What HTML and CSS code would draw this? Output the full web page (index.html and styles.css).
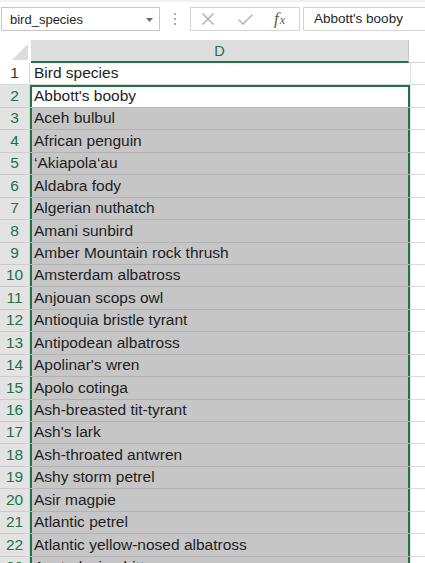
FILE: index.html
```html
<!DOCTYPE html>
<html>
<head>
<meta charset="utf-8">
<link rel="stylesheet" href="styles.css">
</head>
<body>
<div class="toolbar">
  <div class="namebox">
    <span class="nb-text">bird_species</span>
    <svg class="nb-arrow" width="7" height="4" viewBox="0 0 7 4"><path d="M0 0H7L3.5 4Z" fill="#6d6d6d"/></svg>
  </div>
  <div class="dots"><i></i><i></i><i></i></div>
  <div class="fxbtns">
    <svg class="ic-x" width="12" height="12" viewBox="0 0 12 12"><path d="M0.5 0.5L11.5 11.5M11.5 0.5L0.5 11.5" stroke="#ababab" stroke-width="1.3" fill="none"/></svg>
    <svg class="ic-ok" width="15" height="11" viewBox="0 0 15 11"><path d="M0.6 5.6L5 10L14.4 0.6" stroke="#ababab" stroke-width="1.3" fill="none"/></svg>
    <span class="fx"><span class="f">f</span><span class="x">x</span></span>
  </div>
  <div class="formula">Abbott's booby</div>
</div>
<div class="sheet">
  <div class="hrow">
    <div class="corner"><svg width="31" height="23" viewBox="0 0 31 23"><path d="M12 20L28 4V20Z" fill="#dcdcdc"/></svg></div>
    <div class="hd">D</div>
    <div class="he"></div>
  </div>
  <div class="row"><div class="rh">1</div><div class="cd">Bird species</div><div class="ce"></div></div>
  <div class="row srow"><div class="rh">2</div><div class="cd act">Abbott's booby</div><div class="ce"></div></div>
  <div class="row srow"><div class="rh">3</div><div class="cd sel">Aceh bulbul</div><div class="ce"></div></div>
  <div class="row srow"><div class="rh">4</div><div class="cd sel">African penguin</div><div class="ce"></div></div>
  <div class="row srow"><div class="rh">5</div><div class="cd sel">‘Akiapola‘au</div><div class="ce"></div></div>
  <div class="row srow"><div class="rh">6</div><div class="cd sel">Aldabra fody</div><div class="ce"></div></div>
  <div class="row srow"><div class="rh">7</div><div class="cd sel">Algerian nuthatch</div><div class="ce"></div></div>
  <div class="row srow"><div class="rh">8</div><div class="cd sel">Amani sunbird</div><div class="ce"></div></div>
  <div class="row srow"><div class="rh">9</div><div class="cd sel">Amber Mountain rock thrush</div><div class="ce"></div></div>
  <div class="row srow"><div class="rh">10</div><div class="cd sel">Amsterdam albatross</div><div class="ce"></div></div>
  <div class="row srow"><div class="rh">11</div><div class="cd sel">Anjouan scops owl</div><div class="ce"></div></div>
  <div class="row srow"><div class="rh">12</div><div class="cd sel">Antioquia bristle tyrant</div><div class="ce"></div></div>
  <div class="row srow"><div class="rh">13</div><div class="cd sel">Antipodean albatross</div><div class="ce"></div></div>
  <div class="row srow"><div class="rh">14</div><div class="cd sel">Apolinar's wren</div><div class="ce"></div></div>
  <div class="row srow"><div class="rh">15</div><div class="cd sel">Apolo cotinga</div><div class="ce"></div></div>
  <div class="row srow"><div class="rh">16</div><div class="cd sel">Ash-breasted tit-tyrant</div><div class="ce"></div></div>
  <div class="row srow"><div class="rh">17</div><div class="cd sel">Ash's lark</div><div class="ce"></div></div>
  <div class="row srow"><div class="rh">18</div><div class="cd sel">Ash-throated antwren</div><div class="ce"></div></div>
  <div class="row srow"><div class="rh">19</div><div class="cd sel">Ashy storm petrel</div><div class="ce"></div></div>
  <div class="row srow"><div class="rh">20</div><div class="cd sel">Asir magpie</div><div class="ce"></div></div>
  <div class="row srow"><div class="rh">21</div><div class="cd sel">Atlantic petrel</div><div class="ce"></div></div>
  <div class="row srow"><div class="rh">22</div><div class="cd sel">Atlantic yellow-nosed albatross</div><div class="ce"></div></div>
  <div class="row srow"><div class="rh">23</div><div class="cd sel">Australasian bittern</div><div class="ce"></div></div>
</div>
</body>
</html>
```
FILE: styles.css
```css
* { box-sizing: border-box; }
html, body {
  margin: 0;
  padding: 0;
  background: #ffffff;
  overflow: hidden;
  height: 563px;
}
body {
  font-family: "Liberation Sans", Arial, sans-serif;
  color: #222222;
}
.toolbar {
  height: 40px;
  border-top: 2px solid #f1f1f1;
  padding: 5px 0 0 1px;
  display: flex;
  align-items: flex-start;
}
.namebox {
  width: 159px;
  height: 24px;
  border: 1px solid #c6c6c6;
  display: flex;
  align-items: center;
  justify-content: space-between;
  padding: 0 6px 0 8px;
  font-size: 13px;
  color: #262626;
}
.nb-text { padding-top: 1px; }
.nb-arrow { margin-top: 1px; }
.dots {
  width: 30px;
  height: 24px;
  display: flex;
  flex-direction: column;
  align-items: center;
  justify-content: center;
  gap: 3px;
}
.dots i {
  display: block;
  width: 2px;
  height: 2px;
  background: #a8a8a8;
}
.fxbtns {
  width: 110px;
  height: 24px;
  border: 1px solid #d4d4d4;
  display: flex;
  align-items: center;
  padding-left: 11px;
}
.ic-ok { margin-left: 24px; margin-top: 1px; }
.fx {
  margin-left: 21px;
  font-family: "Liberation Serif", "Times New Roman", serif;
  font-style: italic;
  color: #5a5a5a;
  display: flex;
  align-items: baseline;
}
.fx .f { font-size: 17px; }
.fx .x { font-size: 12px; margin-left: 1px; }
.formula {
  margin-left: 3px;
  flex: 1;
  height: 24px;
  border: 1px solid #d4d4d4;
  border-right: none;
  padding: 0 0 0 10px;
  font-size: 13.5px;
  line-height: 22px;
  color: #262626;
}
.sheet {
  display: flex;
  flex-direction: column;
}
.hrow {
  height: 23px;
  display: flex;
  flex-shrink: 0;
}
.corner {
  width: 31px;
  background: #ffffff;
  display: flex;
}
.hd {
  width: 378px;
  background: #dedede;
  border-bottom: 2px solid #217346;
  border-right: 1px solid #c4c4c4;
  color: #217346;
  font-size: 14.5px;
  display: flex;
  align-items: center;
  justify-content: center;
  padding-top: 1px;
}
.he {
  flex: 1;
  border-bottom: 1px solid #d6d6d6;
}
.row {
  height: 22.45px;
  flex-shrink: 0;
  display: flex;
  font-size: 15.5px;
  line-height: 18px;
}
.rh {
  width: 30px;
  border-right: 1px solid #d4d4d4;
  border-bottom: 1px solid #dadada;
  display: flex;
  align-items: flex-end;
  justify-content: center;
  padding-bottom: 2px;
  color: #333333;
  background: #ffffff;
}
.srow .rh {
  background: #e3e3e3;
  color: #217346;
  border-bottom-color: #cbcbcb;
}
.cd {
  width: 380px;
  padding: 0 0 2px 4px;
  display: flex;
  align-items: flex-end;
  border-bottom: 1px solid #d6d6d6;
  background: #ffffff;
  color: #1e1e1e;
  white-space: nowrap;
}
.sel {
  background: #c6c6c6;
  border-bottom-color: #b2b2b2;
  box-shadow: inset 2px 0 0 #217346, inset -2px 0 0 #217346;
}
.act {
  background: #ffffff;
  border-bottom-color: #b8b8b8;
  box-shadow: inset 2px 0 0 #217346, inset -2px 0 0 #217346, inset 0 2px 0 #217346;
}
.ce {
  flex: 1;
  border-left: 1px solid #e2e2e2;
  border-bottom: 1px solid #dadada;
  background: #ffffff;
}
```
